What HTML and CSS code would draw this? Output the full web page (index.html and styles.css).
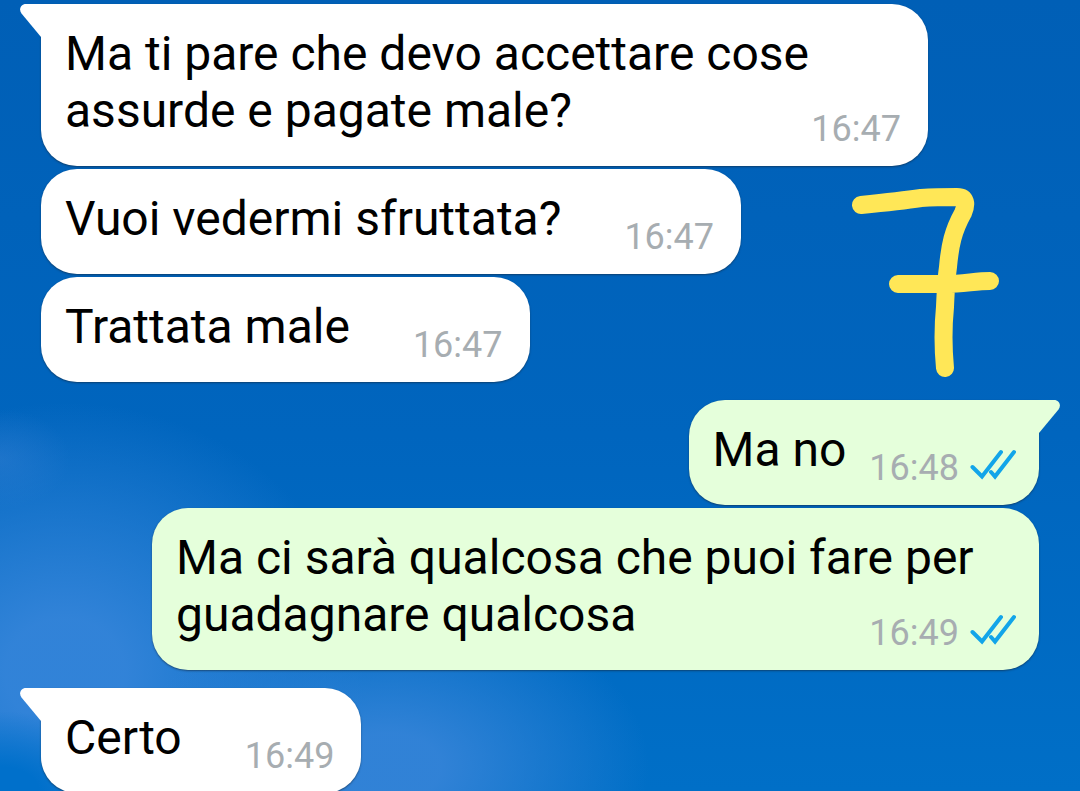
FILE: index.html
```html
<!DOCTYPE html>
<html lang="it">
<head>
<meta charset="utf-8">
<meta name="viewport" content="width=device-width, initial-scale=1">
<title>Chat</title>
<link rel="stylesheet" href="styles.css">
</head>
<body>
<svg class="symbols" aria-hidden="true">
  <symbol id="tail" viewBox="0 0 24 34"><path d="M24 0H6C.5 0-1.5 5.500 1.500 9.500L21 33H24Z"/></symbol>
  <symbol id="ticks" viewBox="0 0 46 32"><path d="M2.500 18L12 27.500L31 3M21 23L25 27.500L44 3"/></symbol>
</svg>
<main class="chat">
  <section class="group incoming">
    <article class="bubble">
      <svg class="tail" aria-hidden="true"><use href="#tail"/></svg>
      <p class="text">Ma ti pare che devo accettare cose assurde e pagate male?<span class="meta"><time>16:47</time></span></p>
    </article>
    <article class="bubble">
      <p class="text">Vuoi vedermi sfruttata?<span class="meta"><time>16:47</time></span></p>
    </article>
    <article class="bubble">
      <p class="text">Trattata male<span class="meta"><time>16:47</time></span></p>
    </article>
  </section>
  <section class="group outgoing">
    <article class="bubble">
      <svg class="tail" aria-hidden="true"><use href="#tail"/></svg>
      <p class="text">Ma no<span class="meta"><time>16:48</time><svg class="ticks" role="img" aria-label="Letto"><use href="#ticks"/></svg></span></p>
    </article>
    <article class="bubble">
      <p class="text">Ma ci sarà qualcosa che puoi fare per guadagnare qualcosa<span class="meta"><time>16:49</time><svg class="ticks" role="img" aria-label="Letto"><use href="#ticks"/></svg></span></p>
    </article>
  </section>
  <section class="group incoming">
    <article class="bubble">
      <svg class="tail" aria-hidden="true"><use href="#tail"/></svg>
      <p class="text">Certo<span class="meta"><time>16:49</time></span></p>
    </article>
  </section>
  <svg class="scribble" viewBox="0 0 150 192" aria-hidden="true">
    <path d="M10 18C30 16 50 14 70 11C85 10 98 10 106 10C115 10 116 17 112 26C102 44 99 58 97 80C95 94 95 98 94 120C92 140 92 160 94 181M47 97H95C112 97 125 94 139 94"/>
  </svg>
</main>
</body>
</html>
```
FILE: styles.css
```css
* {
  box-sizing: border-box;
}

body {
  margin: 0;
  font-family: Roboto, "Liberation Sans", sans-serif;
  color: #000;
}

.symbols {
  display: none;
}

.chat {
  position: relative;
  display: flex;
  flex-direction: column;
  gap: 18px;
  height: 100vh;
  padding: 4px 41px 0;
  overflow: hidden;
  background:
    radial-gradient(ellipse 130px 80px at 0 100%, #0070cb 30%, transparent),
    radial-gradient(ellipse 260px 170px at 36% 97%, rgba(54, 132, 216, 0.9) 20%, transparent),
    radial-gradient(ellipse 300px 270px at 6% 85%, rgba(52, 132, 217, 0.95) 20%, transparent),
    radial-gradient(ellipse 70px 50px at 0 58%, rgba(46, 122, 206, 0.5), transparent),
    linear-gradient(#005fb6, #0065be 55%, #006fc7);
}

.group {
  display: flex;
  flex-direction: column;
  align-items: flex-start;
  gap: 3px;
}

.outgoing {
  align-items: flex-end;
}

.bubble {
  position: relative;
  flex: none;
  max-width: calc(100% - 111px);
  padding: 21px 27px 16px 24px;
  border-radius: 36px;
  background: #fff;
  box-shadow: 0 1px 2px rgba(20, 40, 60, 0.6);
}

.outgoing .bubble {
  padding-right: 23px;
  background: #e5ffdb;
}

.incoming .bubble:has(.tail) {
  border-top-left-radius: 0;
}

.outgoing .bubble:has(.tail) {
  border-top-right-radius: 0;
}

.tail {
  position: absolute;
  top: 0;
  left: -21px;
  width: 24px;
  height: 34px;
  fill: #fff;
}

.outgoing .tail {
  right: -21px;
  left: auto;
  fill: #e5ffdb;
  transform: scaleX(-1);
}

.text {
  display: flow-root;
  margin: 0;
  font-size: 48px;
  line-height: 57px;
}

.meta {
  float: right;
  display: flex;
  align-items: center;
  gap: 11px;
  margin: 26px 0 0 63px;
  font-size: 36px;
  line-height: 42px;
  color: #a7adb1;
}

.outgoing .meta {
  margin-left: 23px;
}

.ticks {
  width: 46px;
  height: 32px;
  margin-bottom: 6px;
  fill: none;
  stroke: #12a5e9;
  stroke-width: 4;
  stroke-linecap: round;
}

.scribble {
  position: absolute;
  top: 187px;
  right: 79px;
  width: 150px;
  height: 192px;
  fill: none;
  stroke: #ffe757;
  stroke-width: 18;
  stroke-linecap: round;
  stroke-linejoin: round;
}
```
